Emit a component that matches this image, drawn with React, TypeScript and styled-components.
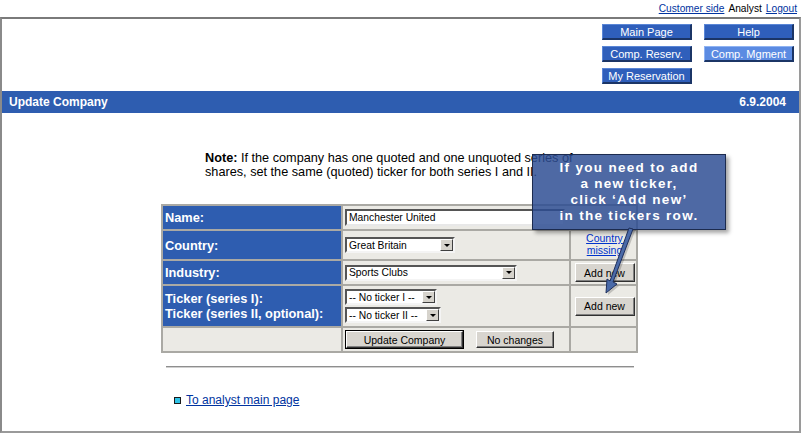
import React from "react";
import styled, { createGlobalStyle } from "styled-components";

const GlobalStyle = createGlobalStyle`
  html, body {
    margin: 0;
    padding: 0;
    background: #ffffff;
    font-family: "Liberation Sans", Arial, sans-serif;
  }
`;

const Page = styled.div`
  position: relative;
  width: 801px;
  height: 433px;
  overflow: hidden;
`;

const TopBar = styled.div`
  height: 17px;
  display: flex;
  justify-content: flex-end;
  align-items: center;
  gap: 4px;
  padding-right: 4px;
  font-size: 10.2px;
`;

const TopLink = styled.a`
  color: #0033a0;
  text-decoration: underline;
`;

const TopText = styled.span`
  color: #000;
`;

const Frame = styled.div`
  height: 412px;
  border: 2px solid #9a9a9a;
  border-top-color: #7a7a7a;
  border-left-color: #8a8a8a;
`;

const NavArea = styled.div`
  display: flex;
  justify-content: flex-end;
  padding: 5px 5px 0 0;
`;

const NavGrid = styled.div`
  display: grid;
  grid-template-columns: 90px 90px;
  column-gap: 12px;
  row-gap: 6px;
`;

const NavButton = styled.div<{ $active?: boolean }>`
  height: 16px;
  box-sizing: border-box;
  display: flex;
  align-items: center;
  justify-content: center;
  color: #fff;
  font-size: 11px;
  background: ${({ $active }) => ($active ? "#5b8be2" : "#2f5fbb")};
  border-top: 1px solid ${({ $active }) => ($active ? "#8fb3f2" : "#5a86d6")};
  border-left: 1px solid ${({ $active }) => ($active ? "#8fb3f2" : "#5a86d6")};
  border-right: 2px solid #1b3566;
  border-bottom: 2px solid #1b3566;
`;

const HeaderBar = styled.div`
  margin-top: 7px;
  height: 22px;
  background: #2e5db0;
  color: #fff;
  font-weight: bold;
  font-size: 12px;
  display: flex;
  align-items: center;
  justify-content: space-between;
  padding: 0 13px 0 7px;
`;

const Note = styled.div`
  margin: 38px 0 0 203px;
  font-size: 12.7px;
  line-height: 14px;
  color: #000;
  width: 390px;
`;

const FormTable = styled.table`
  margin: 25px 0 0 159px;
  width: 477px;
  border-collapse: separate;
  border-spacing: 2px;
  background: #aaa9a4;
  table-layout: fixed;
`;

const Row = styled.tr<{ $h: number }>`
  height: ${({ $h }) => $h}px;
`;

const LabelCell = styled.td`
  background: #2e5db0;
  color: #fff;
  font-weight: bold;
  font-size: 12.8px;
  padding: 0 0 0 2px;
  line-height: 15px;
  vertical-align: middle;
  white-space: nowrap;
`;

const ValueCell = styled.td<{ $center?: boolean }>`
  background: #ebeae5;
  padding: 0 0 0 2px;
  vertical-align: middle;
  text-align: ${({ $center }) => ($center ? "center" : "left")};
`;

const TextInput = styled.div`
  width: 220px;
  height: 17px;
  box-sizing: border-box;
  background: #fff;
  border: 2px solid;
  border-color: #555 #e8e8e8 #e8e8e8 #555;
  font-size: 10.3px;
  line-height: 13px;
  padding-left: 2px;
  color: #000;
`;

const Select = styled.div<{ $w: number }>`
  width: ${({ $w }) => $w}px;
  height: 16px;
  box-sizing: border-box;
  background: #fff;
  border: 2px solid;
  border-color: #555 #f4f4f4 #f4f4f4 #555;
  display: flex;
  align-items: center;
  justify-content: space-between;
  font-size: 10.3px;
  color: #000;
  padding-left: 2px;
`;

const Stack = styled.div`
  display: flex;
  flex-direction: column;
  gap: 2px;
`;

const Drop = styled.span`
  width: 13px;
  height: 12px;
  box-sizing: border-box;
  background: #d6d3cc;
  border: 1px solid;
  border-color: #fff #404040 #404040 #fff;
  display: flex;
  align-items: center;
  justify-content: center;
  &::after {
    content: "";
    border-left: 3px solid transparent;
    border-right: 3px solid transparent;
    border-top: 3px solid #000;
  }
`;

const GrayButton = styled.button<{ $w: number; $h?: number; $default?: boolean }>`
  width: ${({ $w }) => $w}px;
  height: ${({ $h }) => $h ?? 17}px;
  box-sizing: border-box;
  padding: 0;
  font-family: "Liberation Sans", Arial, sans-serif;
  font-size: 10.5px;
  color: #000;
  background: #d8d5cf;
  border: 1px solid;
  border-color: #fff #303030 #303030 #fff;
  box-shadow: ${({ $default }) =>
    $default ? "0 0 0 1px #000, inset -1px -1px #808080" : "inset -1px -1px #808080"};
`;

const ButtonRow = styled.div`
  display: flex;
  gap: 13px;
  padding-left: 1px;
`;

const SmallLink = styled.a`
  color: #0033cc;
  text-decoration: underline;
  font-size: 10.5px;
  line-height: 12px;
  display: inline-block;
`;

const Rule = styled.div`
  margin: 13px 0 0 164px;
  width: 468px;
  height: 2px;
  border-top: 1px solid #8e8e8e;
  border-bottom: 1px solid #d0d0d0;
  box-sizing: border-box;
`;

const LinkRow = styled.div`
  margin: 25px 0 0 172px;
  display: flex;
  align-items: center;
  gap: 5px;
`;

const Bullet = styled.span`
  width: 5px;
  height: 5px;
  background: #2ec3e6;
  border: 1px solid #1a1a1a;
`;

const MainLink = styled.a`
  color: #0033a0;
  font-size: 12px;
  text-decoration: underline;
`;

const Callout = styled.div`
  position: absolute;
  left: 532px;
  top: 154px;
  width: 194px;
  height: 76px;
  box-sizing: border-box;
  background: rgba(44, 76, 146, 0.84);
  border: 1px solid #1c2b4f;
  box-shadow: 3px 3px 4px rgba(0, 0, 0, 0.35);
  color: #fff;
  font-weight: bold;
  font-size: 13.5px;
  letter-spacing: 1.3px;
  line-height: 16px;
  text-align: center;
  padding-top: 5px;
  white-space: nowrap;
`;

const Pointer = styled.svg`
  position: absolute;
  left: 598px;
  top: 226px;
`;

export default function App() {
  return (
    <Page>
      <GlobalStyle />
      <TopBar>
        <TopLink href="#">Customer side</TopLink>
        <TopText>Analyst</TopText>
        <TopLink href="#">Logout</TopLink>
      </TopBar>
      <Frame>
        <NavArea>
          <NavGrid>
            <NavButton>Main Page</NavButton>
            <NavButton>Help</NavButton>
            <NavButton>Comp. Reserv.</NavButton>
            <NavButton $active>Comp. Mgment</NavButton>
            <NavButton>My Reservation</NavButton>
          </NavGrid>
        </NavArea>
        <HeaderBar>
          <span>Update Company</span>
          <span>6.9.2004</span>
        </HeaderBar>
        <Note>
          <b>Note:</b> If the company has one quoted and one unquoted series of
          <br />
          shares, set the same (quoted) ticker for both series I and II.
        </Note>
        <FormTable>
          <colgroup>
            <col style={{ width: 178 }} />
            <col style={{ width: 226 }} />
            <col style={{ width: 65 }} />
          </colgroup>
          <tbody>
            <Row $h={23}>
              <LabelCell>Name:</LabelCell>
              <ValueCell colSpan={2}>
                <TextInput>Manchester United</TextInput>
              </ValueCell>
            </Row>
            <Row $h={28}>
              <LabelCell>Country:</LabelCell>
              <ValueCell>
                <Select $w={110}>
                  <span>Great Britain</span>
                  <Drop />
                </Select>
              </ValueCell>
              <ValueCell $center>
                <SmallLink href="#">
                  Country
                  <br />
                  missing
                </SmallLink>
              </ValueCell>
            </Row>
            <Row $h={23}>
              <LabelCell>Industry:</LabelCell>
              <ValueCell>
                <Select $w={172}>
                  <span>Sports Clubs</span>
                  <Drop />
                </Select>
              </ValueCell>
              <ValueCell $center>
                <GrayButton $w={60} $h={19}>Add new</GrayButton>
              </ValueCell>
            </Row>
            <Row $h={40}>
              <LabelCell>
                Ticker (series I):
                <br />
                Ticker (series II, optional):
              </LabelCell>
              <ValueCell>
                <Stack>
                  <Select $w={92}>
                    <span>-- No ticker I --</span>
                    <Drop />
                  </Select>
                  <Select $w={96}>
                    <span>-- No ticker II --</span>
                    <Drop />
                  </Select>
                </Stack>
              </ValueCell>
              <ValueCell $center>
                <GrayButton $w={60} $h={19}>Add new</GrayButton>
              </ValueCell>
            </Row>
            <Row $h={23}>
              <ValueCell />
              <ValueCell>
                <ButtonRow>
                  <GrayButton $w={117} $default>Update Company</GrayButton>
                  <GrayButton $w={78}>No changes</GrayButton>
                </ButtonRow>
              </ValueCell>
              <ValueCell />
            </Row>
          </tbody>
        </FormTable>
        <Rule />
        <LinkRow>
          <Bullet />
          <MainLink href="#">To analyst main page</MainLink>
        </LinkRow>
      </Frame>
      <Callout>
        If you need to add
        <br />
        a new ticker,
        <br />
        click ‘Add new’
        <br />
        in the tickers row.
      </Callout>
      <Pointer width="40" height="72" viewBox="0 0 40 72">
        <polygon
          points="31,2 35,3 15,56 19,58 8,67 9,53 12,55"
          fill="rgba(0,0,0,0.18)"
          transform="translate(2,2)"
        />
        <polygon
          points="31,2 35,3 15,56 19,58 8,67 9,53 12,55"
          fill="#4a6aa8"
          stroke="#1e2f5c"
          strokeWidth="1"
        />
      </Pointer>
    </Page>
  );
}
